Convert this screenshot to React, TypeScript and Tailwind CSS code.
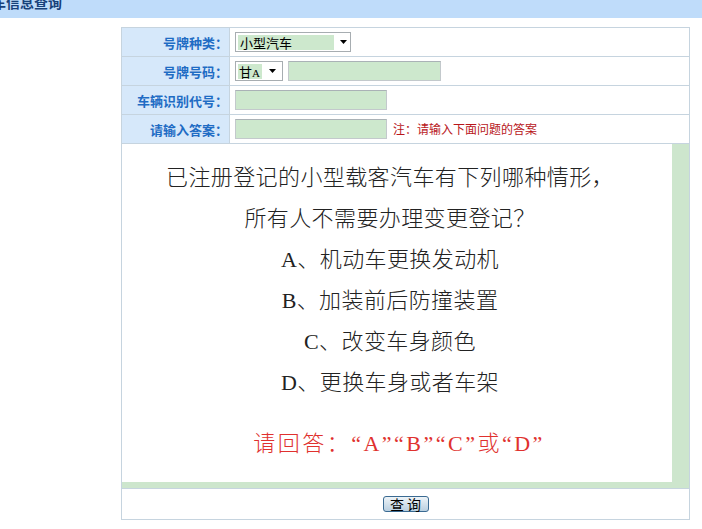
import React from "react";

const cjk = { fontFamily: '"Noto Sans CJK SC", "Liberation Sans", sans-serif' };
const serifMix = { fontFamily: '"Liberation Serif", "Noto Sans CJK SC", serif' };

function Arrow() {
  return (
    <svg width="7" height="4" viewBox="0 0 7 4" className="block">
      <path d="M0 0 L7 0 L3.5 4 Z" fill="#000" />
    </svg>
  );
}

function Label({ children }: { children: React.ReactNode }) {
  return (
    <div className="w-[108px] shrink-0 border-r border-[#c6d4df] bg-[#d6e8fa] flex items-center justify-end pr-[1px] text-[13px] font-bold text-[#1f6cc4] leading-none">
      {children}
    </div>
  );
}

function Input({ w }: { w: string }) {
  return (
    <div className={`${w} h-[20px] border border-[#c3c9cc] border-t-[#aab2b6] bg-[#cde8cd]`} />
  );
}

export default function App() {
  return (
    <div className="w-[702px] h-[529px] bg-white overflow-hidden" style={cjk}>
      <div className="h-[18px] bg-[#bfdcfa] overflow-hidden">
        <div className="ml-[-8px] mt-[-8px] text-[14px] font-bold text-[#17417a] leading-[20px] whitespace-nowrap">
          车信息查询
        </div>
      </div>

      <div className="mt-[9px] ml-[121px] w-[569px] border border-[#c6d4df]">
        {/* Row 1 */}
        <div className="flex h-[29px] border-b border-[#c6d4df]">
          <Label>号牌种类：</Label>
          <div className="flex-1 flex items-center pl-[5px]">
            <div className="w-[116px] h-[20px] border border-[#a7adb1] bg-white flex items-center pl-[2px]">
              <div className="w-[96px] h-[15px] bg-[#cde8cd] text-[13px] leading-[15px] pl-[2px] text-black">
                小型汽车
              </div>
              <div className="ml-[6px]">
                <Arrow />
              </div>
            </div>
          </div>
        </div>
        {/* Row 2 */}
        <div className="flex h-[29px] border-b border-[#c6d4df]">
          <Label>号牌号码：</Label>
          <div className="flex-1 flex items-center pl-[5px] gap-[5px]">
            <div className="w-[48px] h-[20px] border border-[#a7adb1] bg-white flex items-center pl-[2px]">
              <div className="w-[24px] h-[15px] bg-[#cde8cd] text-[13px] leading-[15px] pl-[1px] text-black whitespace-nowrap">
                甘<span className="text-[11px]" style={serifMix}>A</span>
              </div>
              <div className="ml-[7px]">
                <Arrow />
              </div>
            </div>
            <Input w="w-[153px]" />
          </div>
        </div>
        {/* Row 3 */}
        <div className="flex h-[29px] border-b border-[#c6d4df]">
          <Label>车辆识别代号：</Label>
          <div className="flex-1 flex items-center pl-[5px]">
            <Input w="w-[152px]" />
          </div>
        </div>
        {/* Row 4 */}
        <div className="flex h-[29px] border-b border-[#c6d4df]">
          <Label>请输入答案：</Label>
          <div className="flex-1 flex items-center pl-[5px]">
            <Input w="w-[152px]" />
            <span className="ml-[6px] text-[12px] text-[#b8161b] leading-none">注：请输入下面问题的答案</span>
          </div>
        </div>

        {/* Question image */}
        <div className="h-[345px] border-b border-[#c6d4df] bg-[#cde6cd] flex flex-col">
          <div className="flex-1 flex">
            <div className="w-[550px] bg-white flex flex-col items-center pt-[13px] text-[#222]" style={serifMix}>
              <div className="pr-[14px] flex flex-col items-center text-[22px] leading-[41px] font-light tracking-[0.4px]">
                <div>已注册登记的小型载客汽车有下列哪种情形，</div>
                <div>所有人不需要办理变更登记？</div>
                <div>A、机动车更换发动机</div>
                <div>B、加装前后防撞装置</div>
                <div>C、改变车身颜色</div>
                <div>D、更换车身或者车架</div>
              </div>
              <div className="mt-[20px] pl-[4px] text-[22px] leading-[41px] font-light tracking-[2.5px] text-[#e0312e]">
                请回答：“A”“B”“C”或“D”
              </div>
            </div>
          </div>
          <div className="h-[6px]" />
        </div>

        {/* Button row */}
        <div className="h-[30px] flex items-center justify-center">
          <button className="w-[46px] h-[16px] rounded-[3px] border border-[#3a6a92] bg-gradient-to-b from-[#eef4f8] to-[#b9cfe0] text-[14px] leading-[14px] text-black flex items-center justify-center whitespace-nowrap">
            查&nbsp;询
          </button>
        </div>
      </div>
    </div>
  );
}
